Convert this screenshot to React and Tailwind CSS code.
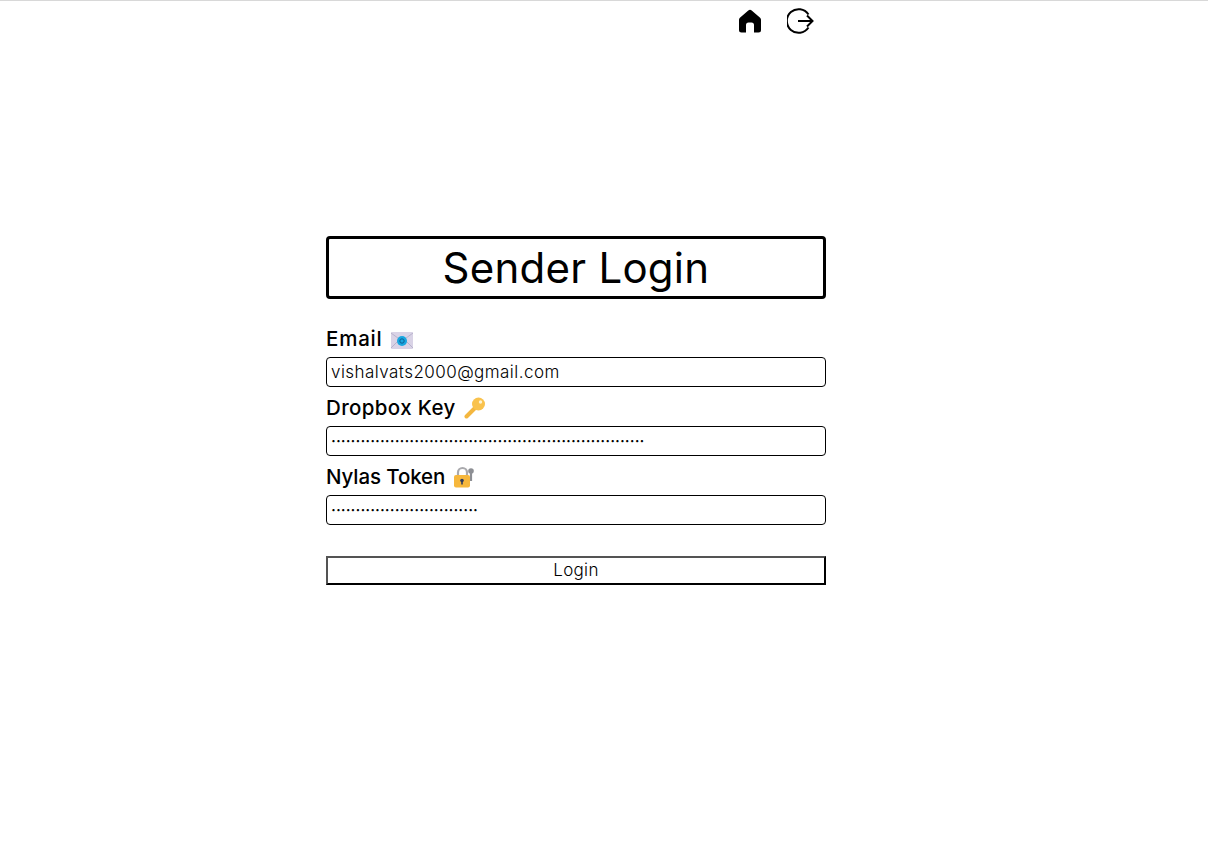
import { useState } from "react";

const font = { fontFamily: 'Inter, "Noto Sans", sans-serif' };

function HomeIcon() {
  return (
    <svg width="24" height="24" viewBox="0 0 24 24" fill="black" aria-hidden="true">
      <path d="M10.3 1.6a2.6 2.6 0 0 1 3.4 0l8.4 7.2c.6.5.9 1.2.9 2V21a2.5 2.5 0 0 1-2.5 2.5H16V16a2.500 2.500 0 0 0-2.500-2.500h-3A2.500 2.500 0 0 0 8 16v7.500H3.500A2.500 2.500 0 0 1 1 21V10.800c0-.8.3-1.500.9-2z" />
    </svg>
  );
}

function LogoutIcon() {
  return (
    <svg width="27" height="26" viewBox="0 0 27 26" fill="none" stroke="black" strokeWidth="2" aria-hidden="true">
      <path d="M21.500 19.500A11.800 11.800 0 1 1 21.500 6.500" />
      <path d="M11 13H25.500M20 7.500 25.500 13l-5.500 5.500" />
    </svg>
  );
}

function MailEmoji() {
  return (
    <svg width="22" height="17" viewBox="0 0 22 17" className="mt-[1px]" aria-hidden="true">
      <rect width="22" height="17" rx="1" fill="#d9d3e6" />
      <path d="M0 1 11 9 22 1M0 16 8 8M22 16 14 8" fill="none" stroke="#b8b2cc" />
      <circle cx="11" cy="9" r="5" fill="#19a7e0" />
      <circle cx="11" cy="9" r="2.200" fill="none" stroke="#0b5f96" />
    </svg>
  );
}

function KeyEmoji() {
  return (
    <svg width="22" height="22" viewBox="0 0 22 22" className="-mt-[2px]" aria-hidden="true">
      <path d="M2.500 19.500 11 11" stroke="#f4b73f" strokeWidth="4" strokeLinecap="round" />
      <circle cx="14.500" cy="7" r="6.500" fill="#f9c24d" />
      <circle cx="16.500" cy="5" r="1.700" fill="#fff3cf" />
    </svg>
  );
}

function LockEmoji() {
  return (
    <svg width="22" height="22" viewBox="0 0 22 22" className="-mt-[2px]" aria-hidden="true">
      <path d="M5 10V6.500a4.500 4.500 0 0 1 9 0V10" fill="none" stroke="#a9a9ad" strokeWidth="2.200" />
      <circle cx="18" cy="5" r="2.800" fill="#8d8f94" />
      <path d="M18 6v9" stroke="#8d8f94" strokeWidth="2.200" />
      <rect x="1" y="9" width="16" height="12.500" rx="2" fill="#f6b73c" />
      <circle cx="9" cy="14.500" r="1.800" fill="#2f3a5c" />
      <path d="M9 15v3.500" stroke="#2f3a5c" strokeWidth="1.600" />
    </svg>
  );
}

function Field({ label, labelClass, icon, value, onChange, masked }) {
  return (
    <label className="block">
      <span className="flex h-[31px] items-center gap-2 pt-[4px] text-[20.5px] leading-none font-medium text-black">
        <span className={labelClass}>{label}</span> {icon}
      </span>
      <input
        value={value}
        onChange={onChange}
        style={font}
        className={`mt-1 mb-1 block h-[30px] w-full rounded-[4px] border border-black px-1 text-[17px] text-black outline-none ${
          masked ? "" : "font-light tracking-[0.45px]"
        }`}
      />
    </label>
  );
}

export default function App() {
  const [email, setEmail] = useState("vishalvats2000@gmail.com");
  const [dropbox, setDropbox] = useState("·".repeat(64));
  const [nylas, setNylas] = useState("·".repeat(30));

  return (
    <div style={font} className="min-h-[860px] border-t border-[#d8d8d8] bg-white pr-[56px] text-black">
      <div className="mx-auto w-[500px]">
        <nav className="flex h-[40px] items-center justify-end">
          <a className="flex w-[50px] justify-center pr-[2px]"><HomeIcon /></a>
          <a className="flex w-[50px] justify-center pr-[1px]"><LogoutIcon /></a>
        </nav>
        <h1 className="mt-[195px] flex h-[63px] items-center justify-center rounded-[4px] border-[3px] border-black text-[42px] leading-none font-normal tracking-[0.25px]">
          Sender Login
        </h1>
        <form className="mt-[23px]" onSubmit={(e) => e.preventDefault()}>
          <Field label="Email" labelClass="tracking-[0.8px]" icon={<MailEmoji />} value={email} onChange={(e) => setEmail(e.target.value)} />
          <Field label="Dropbox Key" labelClass="tracking-[0.36px]" icon={<KeyEmoji />} value={dropbox} onChange={(e) => setDropbox(e.target.value)} masked />
          <Field label="Nylas Token" labelClass="tracking-[-0.1px]" icon={<LockEmoji />} value={nylas} onChange={(e) => setNylas(e.target.value)} masked />
          <button
            style={{ borderStyle: "outset" }}
            className="mt-[31px] block h-[29px] w-full border-2 border-black text-[17px] leading-none font-light tracking-[0.3px]"
          >
            Login
          </button>
        </form>
      </div>
    </div>
  );
}
